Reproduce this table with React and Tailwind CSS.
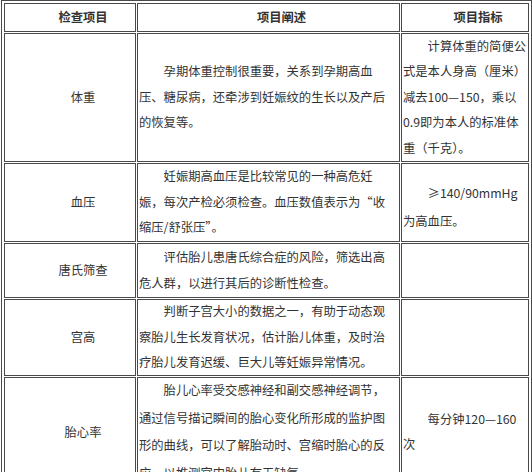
import React from "react";

const font = { fontFamily: '"Noto Sans CJK SC", "Noto Sans", sans-serif' };

function Lines({ lines, indentFirst = true }) {
  return (
    <div className="leading-[25.5px]">
      {lines.map((l, i) => (
        <div key={i} className={"whitespace-nowrap " + (i === 0 && indentFirst ? "pl-[24.6px]" : "")}>
          {l}
        </div>
      ))}
    </div>
  );
}

function Cell({ children, className = "" }) {
  return (
    <div className={"border border-[#4a4a4a] bg-white flex items-center overflow-visible " + className}>
      {children}
    </div>
  );
}

const rows = [
  {
    label: "体重",
    desc: ["孕期体重控制很重要，关系到孕期高血", "压、糖尿病，还牵涉到妊娠纹的生长以及产后", "的恢复等。"],
    ind: ["计算体重的简便公", "式是本人身高（厘米）", "减去100—150，乘以", "0.9即为本人的标准体", "重（千克）。"],
    indCls: "",
  },
  {
    label: "血压",
    desc: ["妊娠期高血压是比较常见的一种高危妊", "娠，每次产检必须检查。血压数值表示为“收", "缩压/舒张压”。"],
    ind: ["≥140/90mmHg", "为高血压。"],
    indCls: "pt-[9px]",
    indLead: "leading-[28px]",
  },
  {
    label: "唐氏筛查",
    desc: ["评估胎儿患唐氏综合症的风险，筛选出高", "危人群，以进行其后的诊断性检查。"],
    ind: null,
  },
  {
    label: "宫高",
    desc: ["判断子宫大小的数据之一，有助于动态观", "察胎儿生长发育状况，估计胎儿体重，及时治", "疗胎儿发育迟缓、巨大儿等妊娠异常情况。"],
    ind: null,
  },
  {
    label: "胎心率",
    desc: ["胎儿心率受交感神经和副交感神经调节，", "通过信号描记瞬间的胎心变化所形成的监护图", "形的曲线，可以了解胎动时、宫缩时胎心的反", "应，以推测宫内胎儿有无缺氧。"],
    ind: ["每分钟120—160", "次"],
    indCls: "",
    descLead: "leading-[27.5px]",
  },
];

export default function App() {
  return (
    <div className="w-[532px] h-[472px] overflow-hidden bg-white text-[#333] text-[12.3px]" style={font}>
      <div className="ml-[1px] w-[531px] border border-[#4a4a4a] p-[2px] grid grid-cols-[132px_263px_128px] grid-rows-[29px_129px_79px_55px_77px_110px] gap-[1px]">
        <Cell className="justify-center pl-[26px] font-bold text-[#333]">检查项目</Cell>
        <Cell className="justify-center pl-[26px] font-bold text-[#333]">项目阐述</Cell>
        <Cell className="justify-center pl-[26px] font-bold text-[#333]">项目指标</Cell>
        {rows.map((r, i) => (
          <React.Fragment key={i}>
            <Cell className="justify-center pl-[26px]">{r.label}</Cell>
            <Cell className="pl-[1px]">
              <div className={r.descLead || ""}>
                {r.desc.map((l, j) => (
                  <div key={j} className={"whitespace-nowrap " + (r.descLead ? "" : "leading-[25.5px] ") + (j === 0 ? "pl-[24.6px]" : "")}>
                    {l}
                  </div>
                ))}
              </div>
            </Cell>
            <Cell className={"pl-[1px] " + (r.indCls || "")}>
              {r.ind ? (
                <div className={r.indLead || "leading-[25.5px]"}>
                  {r.ind.map((l, j) => (
                    <div key={j} className={"whitespace-nowrap " + (j === 0 ? "pl-[24.6px]" : "")}>
                      {l}
                    </div>
                  ))}
                </div>
              ) : null}
            </Cell>
          </React.Fragment>
        ))}
      </div>
    </div>
  );
}
